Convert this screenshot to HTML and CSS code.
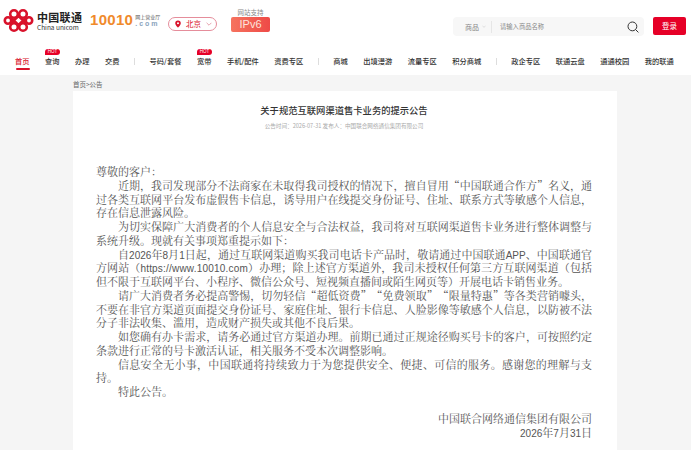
FILE: index.html
```html
<!DOCTYPE html>
<html lang="zh-CN">
<head>
<meta charset="utf-8">
<title>关于规范互联网渠道售卡业务的提示公告</title>
<link rel="stylesheet" href="styles.css">
</head>
<body>
<header class="header">
  <div class="top">
    <div class="logo">
      <svg class="knot" viewBox="0 0 31 25" width="31" height="25" fill="none" stroke="#d9122b" stroke-width="2.6">
        <circle cx="5" cy="12.5" r="3.2"/>
        <circle cx="26" cy="12.5" r="3.2"/>
        <circle cx="11" cy="6" r="3.8"/>
        <circle cx="20" cy="6" r="3.8"/>
        <circle cx="11" cy="19" r="3.8"/>
        <circle cx="20" cy="19" r="3.8"/>
        <path d="M7.5 9.5 15.5 17l8-7.5M7.5 15.5 15.5 8l8 7.5"/>
      </svg>
      <div class="logo-text">
        <span class="logo-cn">中国联通</span>
        <span class="logo-en">China unicom</span>
      </div>
    </div>
    <div class="hall">
      <span class="hall-num">10010</span>
      <div class="hall-side">
        <span class="hall-cn">网上营业厅</span>
        <span class="hall-com">.com</span>
      </div>
    </div>
    <div class="city">
      <svg viewBox="0 0 10 12" width="6" height="8"><path fill="#d9122b" fill-rule="evenodd" d="M5 0a4.6 4.6 0 0 0-4.6 4.6C.4 8 5 12 5 12s4.6-4 4.6-7.4A4.6 4.6 0 0 0 5 0Zm0 3a1.7 1.7 0 1 1 0 3.4A1.7 1.7 0 0 1 5 3Z"/></svg>
      <span class="city-name">北京</span>
      <svg viewBox="0 0 10 6" width="6" height="4" fill="none" stroke="#d9677a" stroke-width="1"><path d="m1 1 4 4 4-4"/></svg>
    </div>
    <div class="ipv6">
      <span class="ipv6-label">网站支持</span>
      <span class="ipv6-badge">IPv6</span>
    </div>
    <div class="search">
      <span class="search-type">商品</span>
      <svg viewBox="0 0 10 6" width="4" height="3" fill="none" stroke="#bbb" stroke-width="1"><path d="m1 1 4 4 4-4"/></svg>
      <span class="search-line"></span>
      <span class="search-hint">请输入商品名称</span>
      <svg class="search-icon" viewBox="0 0 12 12" width="12" height="12" fill="none" stroke="#333" stroke-width="1"><circle cx="5.4" cy="5.4" r="4.4"/><path d="m8.6 8.6 2.8 2.8"/></svg>
    </div>
    <a class="login">登录</a>
  </div>
  <nav class="nav">
    <a class="nav-item active">首页</a>
    <a class="nav-item">查询<i class="hot">HOT</i></a>
    <a class="nav-item">办理</a>
    <a class="nav-item">交费</a>
    <span class="nav-sep"></span>
    <a class="nav-item">号码/套餐</a>
    <a class="nav-item">宽带<i class="hot">HOT</i></a>
    <a class="nav-item">手机/配件</a>
    <a class="nav-item">资费专区</a>
    <span class="nav-sep"></span>
    <a class="nav-item">商城</a>
    <a class="nav-item">出境漫游</a>
    <a class="nav-item">流量专区</a>
    <a class="nav-item">积分商城</a>
    <span class="nav-sep"></span>
    <a class="nav-item">政企专区</a>
    <a class="nav-item">联通云盘</a>
    <a class="nav-item">通通校园</a>
    <a class="nav-item">我的联通</a>
  </nav>
</header>
<main class="main">
  <div class="crumb">首页&gt;公告</div>
  <article class="card">
    <h1 class="title">关于规范互联网渠道售卡业务的提示公告</h1>
    <p class="meta">公告时间：2026-07-31 发布人：中国联合网络通信集团有限公司</p>
    <div class="body">
      <p>尊敬的客户：</p>
      <p class="ind">近期，我司发现部分不法商家在未取得我司授权的情况下，擅自冒用“中国联通合作方”名义，通过各类互联网平台发布虚假售卡信息，诱导用户在线提交身份证号、住址、联系方式等敏感个人信息，存在信息泄露风险。</p>
      <p class="ind">为切实保障广大消费者的个人信息安全与合法权益，我司将对互联网渠道售卡业务进行整体调整与系统升级。现就有关事项郑重提示如下：</p>
      <p class="ind">自<span class="lat">2026</span>年<span class="lat">8</span>月<span class="lat">1</span>日起，通过互联网渠道购买我司电话卡产品时，敬请通过中国联通<span class="lat">APP</span>、中国联通官方网站（<span class="lat url">https://www.10010.com</span>）办理；除上述官方渠道外，我司未授权任何第三方互联网渠道（包括<span class="keep">但不限于</span>互联网平台、小程序、微信公众号、短视频直播间或陌生网页等）开展电话卡销售业务。</p>
      <p class="ind">请广大消费者务必提高警惕，切勿轻信“超低资费”“免费领取”“限量特惠”等各类营销噱头，不要在非官方渠道页面提交身份证号、家庭住址、银行卡信息、人脸影像等敏感个人信息，以防被不法分子非法收集、滥用，造成财产损失或其他不良后果。</p>
      <p class="ind">如您确有办卡需求，请务必通过官方渠道办理。前期已通过正规途径购买号卡的客户，可按照约定条款进行正常的号卡激活认证，相关服务不受本次调整影响。</p>
      <p class="ind">信息安全无小事，中国联通将持续致力于为您提供安全、便捷、可信的服务。感谢您的理解与支持。</p>
      <p class="ind">特此公告。</p>
      <div class="sign">
        <p>中国联合网络通信集团有限公司</p>
        <p><span class="lat">2026</span>年<span class="lat">7</span>月<span class="lat">31</span>日</p>
      </div>
    </div>
  </article>
</main>
</body>
</html>
```
FILE: styles.css
```css
* { box-sizing: border-box; }
html, body { margin: 0; padding: 0; }
body {
  width: 691px;
  height: 450px;
  overflow: hidden;
  background: #f5f5f5;
  font-family: "Noto Sans CJK SC", "Liberation Sans", sans-serif;
  color: #333;
}
p, h1 { margin: 0; }
.header { height: 75px; background: #fff; }
.top { display: flex; align-items: flex-start; height: 41px; padding: 8px 5px 0 3px; }
.logo { display: flex; align-items: center; width: 87px; }
.knot { flex: none; }
.logo-text { display: flex; flex-direction: column; margin-left: 3px; }
.logo-cn { font-size: 11px; line-height: 12px; font-weight: 700; letter-spacing: .3px; color: #222; }
.logo-en { font-size: 6.5px; line-height: 8px; color: #333; white-space: nowrap; }
.hall { display: flex; align-items: center; width: 78px; margin-top: 4px; }
.hall-num { font: 700 15px/16px "Liberation Sans", sans-serif; color: #f08a2c; letter-spacing: .3px; }
.hall-side { display: flex; flex-direction: column; margin-left: 2px; }
.hall-cn { font-size: 5px; line-height: 6px; color: #555; white-space: nowrap; }
.hall-com { font: 700 7px/7px "Liberation Sans", sans-serif; color: #8aa3bd; letter-spacing: 2px; }
.city { display: flex; align-items: center; gap: 5px; width: 49px; height: 14px; margin-top: 9px; padding-left: 6px; border: 1px solid #e58d9b; border-radius: 7px; }
.city-name { font-size: 7.5px; line-height: 10px; color: #d9122b; }
.ipv6 { display: flex; flex-direction: column; align-items: center; width: 39px; margin-left: 14px; }
.ipv6-label { font-size: 6.5px; line-height: 9px; color: #888; }
.ipv6-badge { width: 39px; height: 15px; background: linear-gradient(90deg, #f6735f, #ee4a47); border-radius: 2px; color: #fde3dc; font: 11px/15px "Liberation Sans", sans-serif; text-align: center; }
.search { display: flex; align-items: center; width: 191px; height: 19px; margin: 9px 0 0 183px; padding-left: 12px; background: #f7f7f7; border-radius: 4px; }
.search-type { font-size: 7px; color: #888; }
.search-type + svg { margin-left: 3px; }
.search-line { width: 1px; height: 12px; margin: 0 8px 0 5px; background: #e6e6e6; }
.search-hint { flex: 1; font-size: 6.3px; color: #888; }
.search-icon { margin-right: 5px; }
.login { width: 33px; height: 18px; margin: 9px 0 0 9px; background: #e60027; border-radius: 2px; color: #fff; font-size: 7.5px; line-height: 18px; text-align: center; }
.nav { display: flex; align-items: flex-start; gap: 15.5px; padding: 15px 0 0 15px; }
.nav-item { position: relative; font-size: 7.25px; line-height: 11px; font-weight: 500; color: #333; white-space: nowrap; }
.nav-item.active { color: #d9122b; }
.nav-item.active::after { content: ""; position: absolute; left: 1px; right: 0; top: 12px; height: 2px; background: #d9122b; border-radius: 1px; }
.hot { position: absolute; left: 0; top: -7px; width: 15px; height: 5.5px; background: #e60027; border-radius: 3px 3px 3px 0; color: #fff; font: normal 4.5px/5.5px "Liberation Sans", sans-serif; text-align: center; }
.nav-sep { width: 1px; height: 7px; margin: 2px -1px 0; background: #ddd; }
.main { padding-left: 73px; }
.crumb { height: 16px; font-size: 6.5px; line-height: 18px; color: #666; }
.card { width: 544px; height: 359px; padding: 12px 25px 0 23px; background: #fff; }
.title { font-size: 9.3px; line-height: 14px; font-weight: 500; text-align: center; color: #333; }
.meta { margin-top: 5px; font-size: 5.6px; line-height: 8px; text-align: center; color: #aaa; }
.body { margin-top: 35px; font-family: "Noto Serif CJK SC", "Noto Sans CJK SC", serif; font-size: 11px; line-height: 13.75px; color: #555; text-align: justify; text-spacing-trim: space-all; }
.ind { text-indent: 22px; }
.lat { font-family: "Liberation Sans", sans-serif; font-size: 10px; line-height: 0; }
.url { letter-spacing: .2px; }
.keep { white-space: nowrap; }
.sign { margin-top: 13px; text-align: right; }
```
